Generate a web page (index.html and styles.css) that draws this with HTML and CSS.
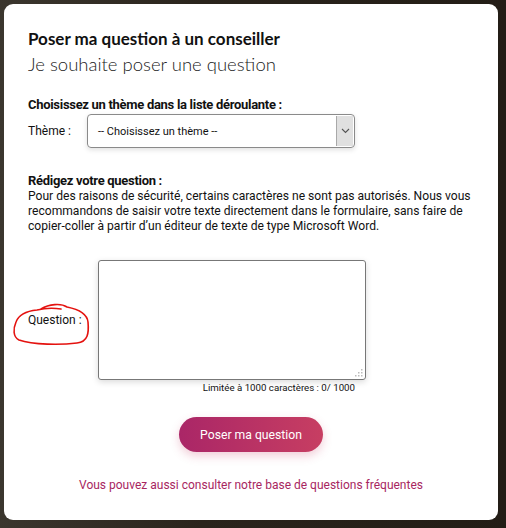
FILE: index.html
```html
<!DOCTYPE html>
<html lang="fr">
<head>
  <meta charset="UTF-8">
  <title>Poser ma question à un conseiller</title>
  <link rel="stylesheet" href="styles.css">
</head>
<body>

  <div class="modal">
    <h1 class="modal-title">Poser ma question à un conseiller</h1>
    <h2 class="modal-subtitle">Je souhaite poser une question</h2>

    <p class="section-title">Choisissez un thème dans la liste déroulante :</p>
    <div class="field-row">
      <label class="field-label">Thème :</label>
      <div class="select-box">
        <span class="select-value">-- Choisissez un thème --</span>
        <span class="select-arrow">
          <svg width="9" height="6" viewBox="0 0 9 6"><path d="M1 1 L4.5 4.5 L8 1" fill="none" stroke="#555" stroke-width="1.1"/></svg>
        </span>
      </div>
    </div>

    <p class="section-title section-title-2">Rédigez votre question :</p>
    <p class="notice">Pour des raisons de sécurité, certains caractères ne sont pas autorisés. Nous vous recommandons de saisir votre texte directement dans le formulaire, sans faire de copier-coller à partir d’un éditeur de texte de type Microsoft Word.</p>

    <div class="question-row">
      <div class="question-label">
        <span>Question :</span>
        <!-- pen mark around the label -->
        <svg class="scribble" width="82" height="48" viewBox="0 0 82 48">
          <path d="M30 9 C38 4, 50 3, 56 7 C66 9, 76 13, 77 22 C78 33, 77 42, 66 43 C50 45, 22 45, 8 40 C2 37, 2 29, 5 22 C8 14, 16 11, 26 10 C34 8, 44 8, 50 9" fill="none" stroke="#e4120f" stroke-width="1.6" stroke-linecap="round"/>
        </svg>
      </div>
      <div class="question-field">
        <div class="textarea">
          <svg class="grip" width="8" height="8" viewBox="0 0 8 8" fill="#bbb">
            <rect x="6" y="0" width="1.5" height="1.5"/>
            <rect x="3" y="3" width="1.5" height="1.5"/><rect x="6" y="3" width="1.5" height="1.5"/>
            <rect x="0" y="6" width="1.5" height="1.5"/><rect x="3" y="6" width="1.5" height="1.5"/><rect x="6" y="6" width="1.5" height="1.5"/>
          </svg>
        </div>
        <div class="counter">Limitée à 1000 caractères : 0/ 1000</div>
      </div>
    </div>

    <div class="actions">
      <button class="btn-submit">Poser ma question</button>
    </div>

    <p class="faq-link">Vous pouvez aussi consulter notre base de questions fréquentes</p>
  </div>

</body>
</html>
```

FILE: styles.css
```css
body {
  margin: 0;
  padding: 4px 8px 8px 4px;
  height: 528px;
  box-sizing: border-box;
  overflow: hidden;
  font-family: Roboto, "Liberation Sans", sans-serif;
  background: linear-gradient(90deg, #3b362e 0%, #2a241c 40%, #231d16 100%);
}

.modal {
  width: 494px;
  height: 516px;
  box-sizing: border-box;
  background: #ffffff;
  border-radius: 9px;
  padding: 25px 24px 0 24px;
  color: #111;
}

.modal-title {
  font-family: Lato, sans-serif;
  font-size: 17px;
  font-weight: 700;
  line-height: 20px;
  margin: 0;
  color: #111;
}

.modal-subtitle {
  font-family: Lato, sans-serif;
  font-size: 18.5px;
  font-weight: 300;
  line-height: 22px;
  margin: 4px 0 0 0;
  color: #222;
}

.section-title {
  font-size: 13px;
  font-weight: 700;
  letter-spacing: -0.3px;
  line-height: 15px;
  margin: 22px 0 0 0;
}

.section-title-2 {
  margin-top: 25px;
}

.field-row {
  display: flex;
  align-items: center;
  margin-top: 2px;
}

.field-label {
  font-size: 12px;
  width: 59px;
}

.select-box {
  width: 268px;
  height: 34px;
  box-sizing: border-box;
  border: 1px solid #8a8a8a;
  border-radius: 4px;
  box-shadow: 0 2px 5px rgba(0, 0, 0, 0.12);
  display: flex;
  align-items: stretch;
  overflow: hidden;
}

.select-value {
  flex: 1;
  font-size: 11px;
  padding-left: 10px;
  display: flex;
  align-items: center;
}

.select-arrow {
  width: 16px;
  background: #e0e0e0;
  border-left: 1px solid #a9a9a9;
  display: flex;
  align-items: center;
  justify-content: center;
  margin: 1px 1px 1px 0;
}

.notice {
  font-size: 12.1px;
  line-height: 15px;
  margin: 1px 0 0 0;
}

.question-row {
  display: flex;
  align-items: flex-start;
  margin-top: 26px;
}

.question-label {
  position: relative;
  width: 70px;
  padding-top: 53px;
  font-size: 12px;
}

.scribble {
  position: absolute;
  left: -17px;
  top: 40px;
}

.question-field {
  display: flex;
  flex-direction: column;
  align-items: flex-end;
  width: 268px;
}

.textarea {
  position: relative;
  width: 268px;
  height: 120px;
  box-sizing: border-box;
  border: 1px solid #777;
  border-radius: 3px;
  box-shadow: 0 2px 6px rgba(0, 0, 0, 0.15);
}

.grip {
  position: absolute;
  right: 2px;
  bottom: 2px;
}

.counter {
  font-size: 9.7px;
  margin-top: 2px;
  margin-right: 11px;
}

.actions {
  display: flex;
  justify-content: center;
  margin-top: 24px;
}

.btn-submit {
  width: 144px;
  height: 35px;
  border: none;
  border-radius: 18px;
  background: linear-gradient(90deg, #aa2667 0%, #c73e62 100%);
  color: #fff;
  font-family: Roboto, sans-serif;
  font-size: 12.2px;
  box-shadow: 0 4px 10px rgba(200, 60, 100, 0.25);
}

.faq-link {
  text-align: center;
  color: #a8265f;
  font-size: 12px;
  margin: 26px 0 0 0;
}
```
